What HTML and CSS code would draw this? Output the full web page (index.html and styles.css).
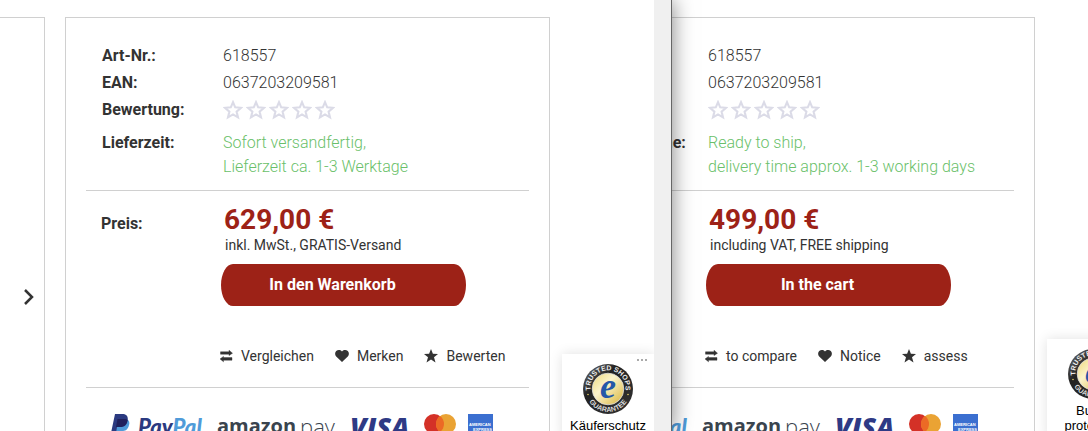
FILE: index.html
```html
<!DOCTYPE html>
<html lang="de">
<head>
<meta charset="utf-8">
<title>Artikel 618557</title>
<link rel="stylesheet" href="styles.css">
</head>
<body>
<svg class="defs" aria-hidden="true">
  <defs>
    <symbol id="star-outline" viewBox="0 0 20 20"><path d="M10 2.200 12.200 7.300 18 7.800 13.600 11.600 15 17.400 10 14.400 5 17.400 6.400 11.600 2 7.800 7.800 7.300Z" fill="none" stroke="#dbdbe7" stroke-width="2.100"/></symbol>
    <symbol id="compare" viewBox="0 0 14 14"><path d="M1.500 2.800h8.500V1.200L13.500 4.200 10 6.600V5.200H1.500zM13 8.600H4.500V7.400L1 9.900l3.500 2.900v-1.600H13z" fill="#333" stroke="#333" stroke-width=".4"/></symbol>
    <symbol id="heart" viewBox="0 0 14 14"><path d="M7 13 1.200 7.500C-.3 5.900-.2 3.300 1.200 2 2.900.5 5.500.8 7 2.400 8.500.8 11.100.5 12.800 2c1.400 1.300 1.500 3.900 0 5.500z" fill="#333"/></symbol>
    <symbol id="star" viewBox="0 0 14 14"><path d="m7 0 1.900 4.700 5.100.2-4 3.300 1.500 5.200L7 10.400l-4.500 3 1.500-5.200L0 4.900l5.100-.2z" fill="#333"/></symbol>
    <symbol id="paypal-mark" viewBox="0 0 20 24">
      <path d="M6 5h8c4 0 5 3 4 6-1 5-4 6-7 6H9l-1 6H3z" fill="#4f9bd9"/>
      <path d="M4 0h7c5 0 6.500 3 5.500 7-1 5-4 6-7.500 6H6l-1 6H0z" fill="#2b3a80"/>
      <path d="M6.500 5H14c1 0 2 .4 2.600 1-.8 5-3.600 7-7.600 7H5z" fill="#20215c"/>
    </symbol>
    <symbol id="mastercard" viewBox="0 0 32 20">
      <circle cx="10" cy="10" r="10" fill="#d43127"/><circle cx="22" cy="10" r="10" fill="#eaa334"/>
      <path d="M16 2a10 10 0 0 1 0 16 10 10 0 0 1 0-16z" fill="#ec6a25"/>
    </symbol>
    <symbol id="amex" viewBox="0 0 25 25">
      <path d="M0 0h25v25H0z" fill="#3b6fd0"/>
      <text x="1" y="12" font-family="Liberation Sans" font-weight="700" font-size="4" fill="#fff">AMERICAN</text>
      <text x="5" y="17" font-family="Liberation Sans" font-weight="700" font-size="4" fill="#fff">EXPRESS</text>
    </symbol>
    <linearGradient id="rim" x1="0" y1="0" x2="1" y2="1"><stop offset="0" stop-color="#777"/><stop offset=".35" stop-color="#222"/><stop offset="1" stop-color="#333"/></linearGradient>
    <linearGradient id="gold" x1="0" y1="0" x2="1" y2="1"><stop offset="0" stop-color="#efd878"/><stop offset=".4" stop-color="#fbf3cc"/><stop offset="1" stop-color="#d8b437"/></linearGradient>
    <path id="arc-top" d="M8.300 29.500A17.600 17.600 0 1 1 41.700 29.500"/>
    <path id="arc-bottom" d="M2.700 29A22.600 22.600 0 0 0 47.300 29"/>
    <symbol id="seal" viewBox="0 0 50 50">
      <circle cx="25" cy="25" r="25" fill="url(#rim)"/>
      <circle cx="25" cy="25" r="15.800" fill="url(#gold)" stroke="#ddd" stroke-width=".8"/>
      <text font-family="Liberation Sans" font-weight="700" font-size="7" fill="#eee" text-anchor="middle"><textPath href="#arc-top" startOffset="50%">TRUSTED SHOPS</textPath></text>
      <text font-family="Liberation Sans" font-weight="700" font-size="7" fill="#ddd" text-anchor="middle"><textPath href="#arc-bottom" startOffset="50%">GUARANTEE</textPath></text>
      <circle cx="5" cy="30.500" r=".8" fill="#e4cf6a"/><circle cx="45" cy="30.500" r=".8" fill="#e4cf6a"/>
      <text x="25" y="33.500" font-family="Liberation Serif" font-style="italic" font-weight="700" font-size="36" fill="#2557a8" text-anchor="middle">e</text>
    </symbol>
  </defs>
</svg>

<div class="screen">
  <main class="pane pane-de">
    <div class="page">
      <section class="gallery">
        <button class="next" aria-label="Weiter"><svg width="12" height="18" viewBox="0 0 12 18"><path d="M2 2 9 9 2 16" fill="none" stroke="#333" stroke-width="2.500"/></svg></button>
      </section>
      <article class="card">
        <dl class="facts">
          <dt>Art-Nr.:</dt><dd>618557</dd>
          <dt>EAN:</dt><dd>0637203209581</dd>
          <dt>Bewertung:</dt>
          <dd class="stars"><svg><use href="#star-outline"/></svg><svg><use href="#star-outline"/></svg><svg><use href="#star-outline"/></svg><svg><use href="#star-outline"/></svg><svg><use href="#star-outline"/></svg></dd>
          <dt class="delivery">Lieferzeit:</dt><dd class="delivery stock">Sofort versandfertig,<br>Lieferzeit ca. 1-3 Werktage</dd>
        </dl>
        <div class="buy">
          <span class="buy-label">Preis:</span>
          <div class="offer">
            <strong class="price">629,00 €</strong>
            <span class="tax">inkl. MwSt., GRATIS-Versand</span>
            <button class="cart">In den Warenkorb</button>
          </div>
        </div>
        <nav class="actions">
          <a href="#"><svg><use href="#compare"/></svg>Vergleichen</a>
          <a href="#"><svg><use href="#heart"/></svg>Merken</a>
          <a href="#"><svg><use href="#star"/></svg>Bewerten</a>
        </nav>
        <div class="payments">
          <svg class="pp-mark"><use href="#paypal-mark"/></svg>
          <span class="paypal">Pay<span>Pal</span></span>
          <span class="amazon"><b>amazon</b><span>pay</span></span>
          <span class="visa">VISA</span>
          <svg class="mc"><use href="#mastercard"/></svg>
          <svg class="ax"><use href="#amex"/></svg>
        </div>
      </article>
    </div>
    <div class="scrollbar"></div>
    <aside class="trust">
      <span class="dots"><i></i><i></i><i></i></span>
      <svg><use href="#seal"/></svg>
      <span>Käuferschutz</span>
    </aside>
  </main>

  <section class="pane pane-en" lang="en">
    <article class="card">
      <dl class="facts">
        <dt>Item no.:</dt><dd>618557</dd>
        <dt>EAN:</dt><dd>0637203209581</dd>
        <dt>Rating:</dt>
        <dd class="stars"><svg><use href="#star-outline"/></svg><svg><use href="#star-outline"/></svg><svg><use href="#star-outline"/></svg><svg><use href="#star-outline"/></svg><svg><use href="#star-outline"/></svg></dd>
        <dt class="delivery">Delivery time:</dt><dd class="delivery stock">Ready to ship,<br>delivery time approx. 1-3 working days</dd>
      </dl>
      <div class="buy">
        <span class="buy-label">Price:</span>
        <div class="offer">
          <strong class="price">499,00 €</strong>
          <span class="tax">including VAT, FREE shipping</span>
          <button class="cart">In the cart</button>
        </div>
      </div>
      <nav class="actions">
        <a href="#"><svg><use href="#compare"/></svg>to compare</a>
        <a href="#"><svg><use href="#heart"/></svg>Notice</a>
        <a href="#"><svg><use href="#star"/></svg>assess</a>
      </nav>
      <div class="payments">
        <svg class="pp-mark"><use href="#paypal-mark"/></svg>
        <span class="paypal">Pay<span>Pal</span></span>
        <span class="amazon"><b>amazon</b><span>pay</span></span>
        <span class="visa">VISA</span>
        <svg class="mc"><use href="#mastercard"/></svg>
        <svg class="ax"><use href="#amex"/></svg>
      </div>
    </article>
    <aside class="trust">
      <svg><use href="#seal"/></svg>
      <span>Buyer<br>protection</span>
    </aside>
  </section>
</div>
</body>
</html>
```
FILE: styles.css
```css
* { box-sizing: border-box; }

body {
  margin: 0;
  overflow: hidden;
  background: #fff;
  color: #333;
  font: 16px/24px Roboto, "Liberation Sans", sans-serif;
}

.defs { position: absolute; width: 0; height: 0; }

.screen {
  display: grid;
  grid-template: 100vh / 672fr 416fr;
}

.pane {
  position: relative;
  display: flex;
  min-width: 0;
  background: #fff;
}

.pane-de {
  z-index: 1;
  border-right: 1px solid #666;
  box-shadow: 0 0 20px rgba(0, 0, 0, 0.5);
}

.pane-en {
  justify-content: flex-end;
  overflow: hidden;
  padding: 17px 53px 0 0;
}

.page {
  display: flex;
  flex: 1;
  gap: 20px;
  min-width: 0;
  padding: 17px 104px 0 0;
}

.gallery {
  display: flex;
  flex: 0 0 45px;
  justify-content: flex-end;
  padding: 270px 9px 0 0;
  border: solid #d0d0d0;
  border-width: 1px 1px 0 0;
}

.next {
  display: block;
  width: 12px;
  height: 18px;
  padding: 0;
  border: 0;
  background: none;
}

.next svg { display: block; }

.scrollbar { flex: 0 0 17px; background: #f0f0f0; }

.card {
  flex: 1;
  padding: 24px 20px 0;
  border: solid #d0d0d0;
  border-width: 1px 1px 0;
}

.pane-en .card { flex: 0 0 485px; }

.facts {
  display: grid;
  grid-template-columns: 121px 1fr;
  margin: 0;
  padding: 0 0 11px 16px;
  border-bottom: 1px solid #d0d0d0;
  line-height: 27px;
}

.facts dt { font-weight: 700; white-space: nowrap; }
.facts dd { margin: 0; font-weight: 300; white-space: nowrap; }

.facts .stars { display: flex; align-items: center; gap: 3px; }
.stars svg { width: 20px; height: 20px; }

.facts .delivery { padding-top: 8px; line-height: 24px; }
.facts .stock { color: #6abf6a; }

.buy {
  display: grid;
  grid-template-columns: 120px 1fr;
  padding: 13px 0 0 15px;
}

.buy-label { padding-top: 8px; font-weight: 700; }

.offer { display: flex; flex-direction: column; align-items: flex-start; }

.price {
  padding-left: 3px;
  color: #9d2217;
  font-size: 28px;
  line-height: 32px;
}

.tax { padding-left: 4px; font-size: 14px; line-height: 18px; }

.cart {
  width: 245px;
  height: 42px;
  margin-top: 10px;
  padding: 0 22px 0 0;
  border: 0;
  border-radius: 12px / 21px;
  background: #9d2217;
  color: #fff;
  font: 700 16px/24px Roboto, "Liberation Sans", sans-serif;
}

.actions {
  display: flex;
  gap: 21px;
  padding: 38px 0 19px 133px;
  border-bottom: 1px solid #d0d0d0;
}

.actions a {
  display: flex;
  align-items: center;
  gap: 8px;
  color: #333;
  font-size: 14px;
  text-decoration: none;
  white-space: nowrap;
}

.actions svg { width: 14px; height: 14px; }

.payments {
  display: flex;
  align-items: flex-start;
  padding: 26px 0 0 25px;
  white-space: nowrap;
}

.payments svg { flex: none; }
.pp-mark { width: 20px; height: 24px; }

.paypal {
  width: 66px;
  margin-left: 7px;
  color: #2b3a80;
  font: italic 900 22px/26px Lato, sans-serif;
}

.paypal span { color: #4f9bd9; }

.amazon {
  display: flex;
  gap: 4px;
  width: 120px;
  margin-left: 13px;
  color: #3a444e;
  font: 20px/24px "Open Sans", sans-serif;
}

.amazon span { font-size: 22px; font-weight: 300; }

.visa {
  width: 62px;
  margin-left: 13px;
  color: #2e3a85;
  font: italic 800 27px/26px "Open Sans", sans-serif;
}

.mc { width: 32px; height: 20px; margin-left: 12px; }
.ax { width: 25px; height: 25px; margin-left: 12px; }

/* Buyer protection badge, docked to the lower edge of each pane */
.trust {
  position: absolute;
  right: 17px;
  bottom: -8px;
  display: flex;
  flex-direction: column;
  align-items: center;
  width: 92px;
  padding: 10px 0 6px;
  background: #fff;
  box-shadow: 0 0 12px rgba(0, 0, 0, 0.12);
  clip-path: inset(-12px 0 0 -12px);
  color: #000;
  font: 13px/15px "Liberation Sans", sans-serif;
  text-align: center;
}

.trust > svg { width: 50px; height: 50px; margin-bottom: 4px; }

.pane-de .trust { right: 17px; }
.pane-en .trust { right: -51px; }

.dots {
  position: absolute;
  top: 5px;
  right: 7px;
  display: flex;
  gap: 2px;
}

.dots i { width: 2px; height: 2px; background: #aaa; }
```
